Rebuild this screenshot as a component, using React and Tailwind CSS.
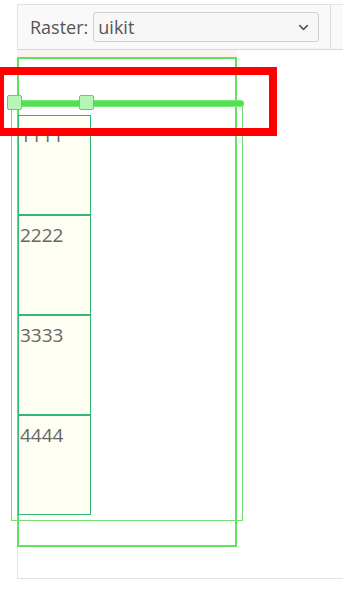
import { ChevronDown } from "lucide-react";

function App() {
  const cells = ["1111", "2222", "3333", "4444"];

  return (
    <div
      className="relative w-[343px] h-[600px] bg-white overflow-hidden"
      style={{ fontFamily: '"Open Sans", "Noto Sans", sans-serif' }}
    >
      {/* panel */}
      <div className="ml-[17px] mt-[4px] h-[575px] border-l border-t border-b border-[#e2e2e2]">
        <div className="h-[45px] flex items-center bg-[#f9f9f9] border-b border-[#d6d6d6]">
          <span className="pl-[12px] text-[18px] text-[#555] leading-none">Raster:</span>
          <div className="ml-[5px] w-[226px] h-[30px] flex items-center justify-between border border-[#cfcfcf] rounded-[3px] bg-[#f7f7f7] pl-[4px] pr-[7px]">
            <span className="text-[18px] text-[#555] leading-none">uikit</span>
            <ChevronDown size={15} strokeWidth={2.5} className="text-[#555]" />
          </div>
          <div className="ml-[11px] h-full border-l border-[#dcdcdc]"></div>
        </div>

        <div className="-ml-px w-[220px] h-[7px] bg-[#fbf4ef]"></div>
        <div className="-ml-px w-[220px] h-[490px] border-2 border-[#5fe35f]"></div>
      </div>

      {/* grid outline with its cells, drawn over the panel */}
      <div className="absolute left-[11px] top-[104px] w-[232px] h-[417px] border border-[#72e072] pl-[6px] pt-[10px]">
        <div className="w-[73px] flex flex-col">
          {cells.map((c) => (
            <div
              key={c}
              className="h-[100px] border border-[#33b573] bg-[#fefef2] text-[19px] text-[#666] leading-none pt-[10px] pl-px"
            >
              {c}
            </div>
          ))}
        </div>
      </div>

      {/* slider */}
      <div className="absolute left-[14px] top-[100px] w-[230px] h-[7px] bg-[#4ee24e] border-y border-[#7be87b] rounded-r-full"></div>
      <div className="absolute left-[7px] top-[95px] w-[15px] h-[15px] bg-[#b8f5b8] border border-[#6cc86c] rounded-[2px]"></div>
      <div className="absolute left-[79px] top-[95px] w-[15px] h-[15px] bg-[#b8f5b8] border border-[#6cc86c] rounded-[2px]"></div>

      {/* highlight */}
      <div className="absolute left-[-4px] top-[67px] w-[281px] h-[69px] border-[8px] border-[#ff0000]"></div>
    </div>
  );
}

export default App;
